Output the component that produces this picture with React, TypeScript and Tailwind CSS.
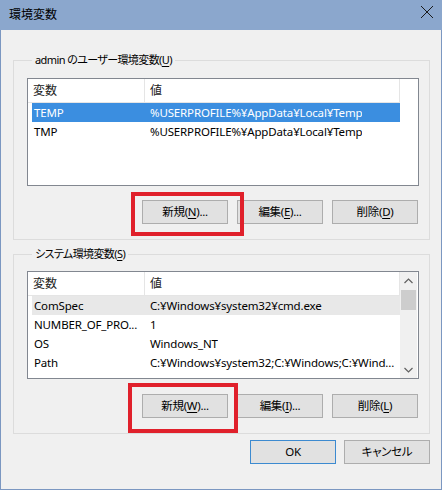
import React from 'react';

type Row = { name: string; value: string };

const userVars: Row[] = [
  { name: 'TEMP', value: '%USERPROFILE%¥AppData¥Local¥Temp' },
  { name: 'TMP', value: '%USERPROFILE%¥AppData¥Local¥Temp' },
];

const systemVars: Row[] = [
  { name: 'ComSpec', value: 'C:¥Windows¥system32¥cmd.exe' },
  { name: 'NUMBER_OF_PRO...', value: '1' },
  { name: 'OS', value: 'Windows_NT' },
  { name: 'Path', value: 'C:¥Windows¥system32;C:¥Windows;C:¥Wind...' },
];

const Mnemonic: React.FC<{ label: string; k: string; dots?: boolean }> = ({ label, k, dots }) => (
  <span>
    {label}(<span className="underline underline-offset-2">{k}</span>){dots ? '...' : ''}
  </span>
);

const Button: React.FC<{ children: React.ReactNode; primary?: boolean }> = ({ children, primary }) => (
  <div
    className={`w-[86px] h-[24px] flex items-center justify-center bg-[#e1e1e1] border text-[11.5px] tracking-[-0.3px] text-black ${
      primary ? 'border-[#3c8ad0]' : 'border-[#adadad]'
    }`}
  >
    {children}
  </div>
);

const Chevron: React.FC<{ down?: boolean }> = ({ down }) => (
  <svg width="9" height="6" viewBox="0 0 9 6" className="block">
    <path
      d={down ? 'M0.5 1 L4.5 5 L8.5 1' : 'M0.5 5 L4.5 1 L8.5 5'}
      fill="none"
      stroke="#606060"
      strokeWidth="1.2"
    />
  </svg>
);

const ListView: React.FC<{ rows: Row[]; selected?: number; inactive?: number; scroll?: boolean }> = ({
  rows,
  selected,
  inactive,
  scroll,
}) => (
  <div className="h-[108px] border border-[#828790] bg-white flex overflow-hidden">
    <div className="w-[372px] shrink-0 flex flex-col">
      {/* header */}
      <div className="h-[24px] flex border-b border-[#e5e5e5] text-[12px] text-[#222]">
        <div className="w-[117px] shrink-0 border-r border-[#e5e5e5] pl-[5px] flex items-center">変数</div>
        <div className="flex-1 border-r border-[#e5e5e5] pl-[5px] flex items-center">値</div>
      </div>
      <div className="pl-[4px] flex flex-col">
        {rows.map((r, i) => (
          <div
            key={r.name}
            className={`h-[19px] flex items-center text-[11.5px] tracking-[-0.15px] whitespace-nowrap ${
              i === selected ? 'bg-[#3b8ee0] text-white' : i === inactive ? 'bg-[#e8e8e8] text-black' : 'text-black'
            }`}
          >
            <div className="w-[112px] shrink-0 pl-[2px] overflow-hidden">{r.name}</div>
            <div className="min-w-0 pl-[6px] overflow-hidden">{r.value}</div>
          </div>
        ))}
      </div>
    </div>
    {scroll && (
      <div className="w-[17px] bg-[#f0f0f0] flex flex-col">
        <div className="h-[18px] flex items-center justify-center">
          <Chevron />
        </div>
        <div className="h-[20px] mx-[1px] bg-[#cdcdcd]" />
        <div className="flex-1" />
        <div className="h-[17px] flex items-center justify-center">
          <Chevron down />
        </div>
      </div>
    )}
  </div>
);

const Group: React.FC<{ legend: React.ReactNode; children: React.ReactNode; className?: string }> = ({
  legend,
  children,
  className,
}) => (
  <fieldset className={`border border-[#dcdcdc] pl-[13px] pr-[10px] pb-[15px] ${className ?? ''}`}>
    <legend className="ml-[5px] px-[3px] h-[16px] leading-[16px] text-[11px] tracking-[-0.6px] text-black">
      {legend}
    </legend>
    {children}
  </fieldset>
);

export default function App() {
  return (
    <div className="relative w-[442px] h-[490px] flex flex-col bg-[#f0f0f0] font-['Noto_Sans','Noto_Sans_CJK_JP',sans-serif] [font-feature-settings:'palt']">
      {/* title bar */}
      <div className="h-[30px] bg-[#8ba7cd] flex items-center justify-between pl-[9px] pr-[8px]">
        <span className="text-[12px] text-black">環境変数</span>
        <svg width="14" height="14" viewBox="0 0 14 14" className="mb-[6px]">
          <path d="M1 1 L13 13 M13 1 L1 13" stroke="#1a1a1a" strokeWidth="1" />
        </svg>
      </div>

      <div className="flex-1 flex flex-col border-x border-b border-[#7b97c1] pl-[12px] pr-[11px]">
        <Group className="mt-[22px]" legend={<Mnemonic label="admin のユーザー環境変数" k="U" />}>
          <div className="mt-[10px]">
            <ListView rows={userVars} selected={0} />
          </div>
          <div className="mt-[14px] flex justify-end gap-[9px] pr-[1px]">
            <Button>
              <Mnemonic label="新規" k="N" dots />
            </Button>
            <Button>
              <Mnemonic label="編集" k="E" dots />
            </Button>
            <Button>
              <Mnemonic label="削除" k="D" />
            </Button>
          </div>
        </Group>

        <Group className="mt-[6px]" legend={<Mnemonic label="システム環境変数" k="S" />}>
          <div className="mt-[9px]">
            <ListView rows={systemVars} inactive={0} scroll />
          </div>
          <div className="mt-[15px] flex justify-end gap-[9px] pr-[1px]">
            <Button>
              <Mnemonic label="新規" k="W" dots />
            </Button>
            <Button>
              <Mnemonic label="編集" k="I" dots />
            </Button>
            <Button>
              <Mnemonic label="削除" k="L" />
            </Button>
          </div>
        </Group>

        <div className="mt-[6px] flex justify-end gap-[8px]">
          <Button primary>OK</Button>
          <Button>キャンセル</Button>
        </div>
      </div>

      {/* red highlight frames */}
      <div className="absolute left-[131px] top-[192px] w-[113px] h-[44px] border-[4px] border-[#e0202b]" />
      <div className="absolute left-[128px] top-[383px] w-[110px] h-[50px] border-[4px] border-[#e0202b]" />
    </div>
  );
}
